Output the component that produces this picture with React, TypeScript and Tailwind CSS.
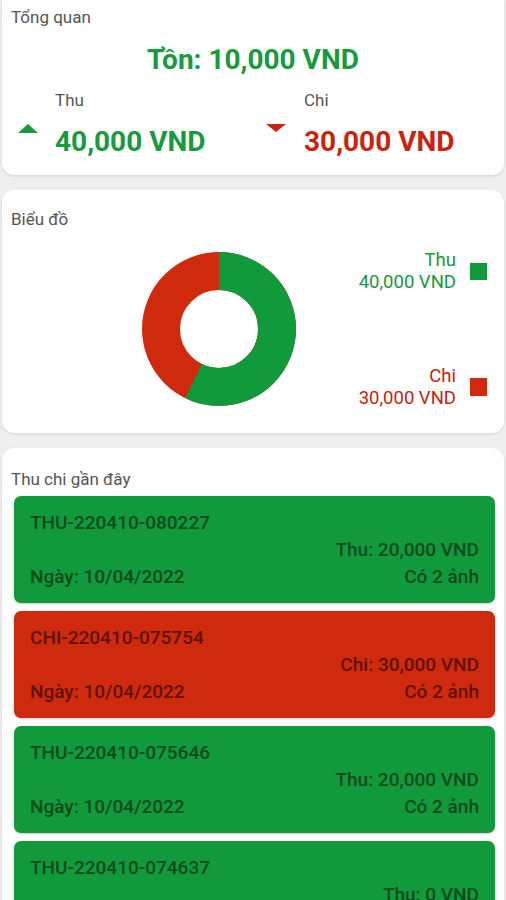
import React from 'react';

const GREEN = '#119a3b';
const RED = '#d02a0e';

const transactions = [
  { id: 'THU-220410-080227', type: 'thu', amount: 'Thu: 20,000 VND', date: 'Ngày: 10/04/2022', photos: 'Có 2 ảnh' },
  { id: 'CHI-220410-075754', type: 'chi', amount: 'Chi: 30,000 VND', date: 'Ngày: 10/04/2022', photos: 'Có 2 ảnh' },
  { id: 'THU-220410-075646', type: 'thu', amount: 'Thu: 20,000 VND', date: 'Ngày: 10/04/2022', photos: 'Có 2 ảnh' },
  { id: 'THU-220410-074637', type: 'thu', amount: 'Thu: 0 VND', date: 'Ngày: 10/04/2022', photos: 'Có 2 ảnh' },
];

const Donut = () => {
  const r = 58;
  const c = 2 * Math.PI * r;
  const green = c * (40000 / 70000);
  return (
    <svg width="154" height="154" viewBox="0 0 154 154">
      <circle cx="77" cy="77" r={r} fill="none" stroke={RED} strokeWidth="38" />
      <circle
        cx="77"
        cy="77"
        r={r}
        fill="none"
        stroke={GREEN}
        strokeWidth="38"
        strokeDasharray={`${green} ${c}`}
        transform="rotate(-90 77 77)"
      />
    </svg>
  );
};

export default function App() {
  return (
    <div className="h-[900px] overflow-hidden bg-[#efefef] font-['Roboto','Noto_Sans',sans-serif]">
      {/* Tổng quan */}
      <div className="mx-[2px] bg-white rounded-b-[12px] shadow-[0_1px_3px_rgba(0,0,0,0.12)] pt-[6px] pb-[15px]">
        <div className="pl-[9px] text-[17px] leading-[22px] text-[#555]">Tổng quan</div>
        <div className="mt-[14px] text-center text-[28px] leading-[36px] font-bold text-[#179a40]">Tồn: 10,000 VND</div>
        <div className="mt-[11px] grid grid-cols-2 px-[3px]">
          <div className="flex items-center">
            <svg width="20" height="9" viewBox="0 0 20 9" className="ml-[13px] mt-[8px] shrink-0">
              <path d="M10 0 L20 9 L0 9 Z" fill="#179a40" />
            </svg>
            <div className="ml-[17px]">
              <div className="text-[17px] leading-[22px] text-[#555]">Thu</div>
              <div className="mt-[13px] text-[28px] leading-[36px] font-bold text-[#179a40]">40,000 VND</div>
            </div>
          </div>
          <div className="flex items-center">
            <svg width="20" height="8" viewBox="0 0 20 8" className="ml-[13px] mt-[6px] shrink-0">
              <path d="M0 0 L20 0 L10 8 Z" fill="#cc230c" />
            </svg>
            <div className="ml-[18px]">
              <div className="text-[17px] leading-[22px] text-[#555]">Chi</div>
              <div className="mt-[13px] text-[28px] leading-[36px] font-bold text-[#c8230c]">30,000 VND</div>
            </div>
          </div>
        </div>
      </div>

      {/* Biểu đồ */}
      <div className="mt-[15px] mx-[2px] bg-white rounded-[12px] shadow-[0_1px_3px_rgba(0,0,0,0.12)] pt-[18px] pb-[24px]">
        <div className="pl-[9px] text-[17px] leading-[22px] text-[#555]">Biểu đồ</div>
        <div className="mt-[19px] flex items-start justify-between pr-[17px]">
          <div className="ml-[140px] mt-[3px]">
            <Donut />
          </div>
          <div className="flex flex-col gap-[72px]">
            <div className="flex items-start gap-[14px]">
              <div className="text-right text-[18.5px] leading-[22px] text-[#179a40]">
                <div>Thu</div>
                <div>40,000 VND</div>
              </div>
              <div className="mt-[14px] w-[17px] h-[17px] bg-[#119a3b]" />
            </div>
            <div className="flex items-start gap-[14px]">
              <div className="text-right text-[18.5px] leading-[22px] text-[#c8230c]">
                <div>Chi</div>
                <div>30,000 VND</div>
              </div>
              <div className="mt-[13px] w-[17px] h-[18px] bg-[#d02a0e]" />
            </div>
          </div>
        </div>
      </div>

      {/* Thu chi gần đây */}
      <div className="mt-[15px] mx-[2px] bg-white rounded-t-[12px] shadow-[0_1px_3px_rgba(0,0,0,0.12)] pt-[20px] pb-[20px]">
        <div className="pl-[9px] text-[17px] leading-[22px] text-[#555]">Thu chi gần đây</div>
        <div className="mt-[6px] pl-[12px] pr-[9px] flex flex-col gap-[8px]">
          {transactions.map((t) => {
            const isThu = t.type === 'thu';
            return (
              <div
                key={t.id}
                className={`rounded-[7px] shadow-[0_1px_2px_rgba(0,0,0,0.2)] px-[16px] py-[13px] text-[19px] leading-[27px] font-medium ${
                  isThu ? 'bg-[#119a3b] text-[#0c4a1c]' : 'bg-[#d02a0e] text-[#5e1206]'
                }`}
              >
                <div>{t.id}</div>
                <div className="text-right">{t.amount}</div>
                <div className="flex justify-between">
                  <span>{t.date}</span>
                  <span>{t.photos}</span>
                </div>
              </div>
            );
          })}
        </div>
      </div>
    </div>
  );
}
